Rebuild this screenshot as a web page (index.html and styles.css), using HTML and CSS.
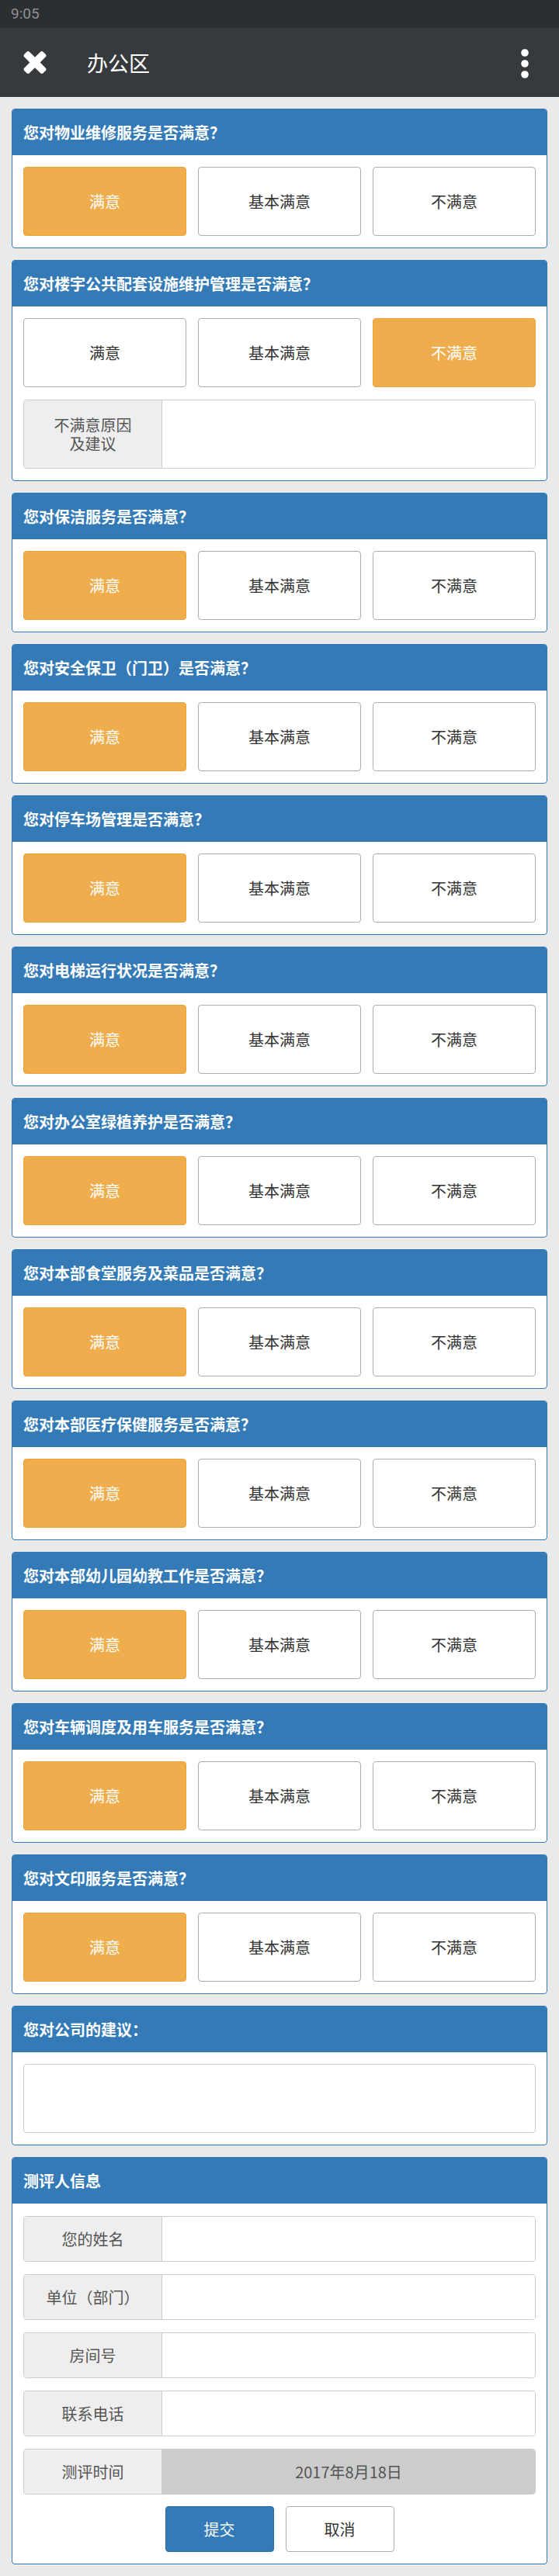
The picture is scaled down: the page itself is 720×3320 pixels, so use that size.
FILE: index.html
```html
<!DOCTYPE html>
<html lang="zh-CN">
<head>
<meta charset="utf-8">
<title>办公区</title>
<link rel="stylesheet" href="styles.css">
</head>
<body>
<div class="statusbar">9:05</div>
<header class="toolbar">
  <svg class="close-icon" viewBox="110 366 1188 1188" width="30" height="29" aria-hidden="true"><path fill="#fff" d="M1298 1322q0 40-28 68l-136 136q-28 28-68 28t-68-28l-294-294-294 294q-28 28-68 28t-68-28l-136-136q-28-28-28-68t28-68l294-294-294-294q-28-28-28-68t28-68l136-136q28-28 68-28t68 28l294 294 294-294q28-28 68-28t68 28l136 136q28 28 28 68t-28 68l-294 294 294 294q28 28 28 68z"/></svg>
  <h1 class="title">办公区</h1>
  <svg class="more-icon" viewBox="0 0 10 38" width="10" height="38" aria-hidden="true"><circle cx="5" cy="5" r="4.8" fill="#fff"/><circle cx="5" cy="19" r="4.8" fill="#fff"/><circle cx="5" cy="33" r="4.8" fill="#fff"/></svg>
</header>

<main class="content">
  <section class="panel">
    <div class="panel-heading">您对物业维修服务是否满意？</div>
    <div class="panel-body">
      <div class="choices"><button class="choice active">满意</button><button class="choice">基本满意</button><button class="choice">不满意</button></div>
    </div>
  </section>

  <section class="panel">
    <div class="panel-heading">您对楼宇公共配套设施维护管理是否满意？</div>
    <div class="panel-body">
      <div class="choices"><button class="choice">满意</button><button class="choice">基本满意</button><button class="choice active">不满意</button></div>
      <div class="input-group reason"><span class="addon">不满意原因<br>及建议</span><textarea class="field"></textarea></div>
    </div>
  </section>

  <section class="panel">
    <div class="panel-heading">您对保洁服务是否满意？</div>
    <div class="panel-body">
      <div class="choices"><button class="choice active">满意</button><button class="choice">基本满意</button><button class="choice">不满意</button></div>
    </div>
  </section>

  <section class="panel">
    <div class="panel-heading">您对安全保卫（门卫）是否满意？</div>
    <div class="panel-body">
      <div class="choices"><button class="choice active">满意</button><button class="choice">基本满意</button><button class="choice">不满意</button></div>
    </div>
  </section>

  <section class="panel">
    <div class="panel-heading">您对停车场管理是否满意？</div>
    <div class="panel-body">
      <div class="choices"><button class="choice active">满意</button><button class="choice">基本满意</button><button class="choice">不满意</button></div>
    </div>
  </section>

  <section class="panel">
    <div class="panel-heading">您对电梯运行状况是否满意？</div>
    <div class="panel-body">
      <div class="choices"><button class="choice active">满意</button><button class="choice">基本满意</button><button class="choice">不满意</button></div>
    </div>
  </section>

  <section class="panel">
    <div class="panel-heading">您对办公室绿植养护是否满意？</div>
    <div class="panel-body">
      <div class="choices"><button class="choice active">满意</button><button class="choice">基本满意</button><button class="choice">不满意</button></div>
    </div>
  </section>

  <section class="panel">
    <div class="panel-heading">您对本部食堂服务及菜品是否满意？</div>
    <div class="panel-body">
      <div class="choices"><button class="choice active">满意</button><button class="choice">基本满意</button><button class="choice">不满意</button></div>
    </div>
  </section>

  <section class="panel">
    <div class="panel-heading">您对本部医疗保健服务是否满意？</div>
    <div class="panel-body">
      <div class="choices"><button class="choice active">满意</button><button class="choice">基本满意</button><button class="choice">不满意</button></div>
    </div>
  </section>

  <section class="panel">
    <div class="panel-heading">您对本部幼儿园幼教工作是否满意？</div>
    <div class="panel-body">
      <div class="choices"><button class="choice active">满意</button><button class="choice">基本满意</button><button class="choice">不满意</button></div>
    </div>
  </section>

  <section class="panel">
    <div class="panel-heading">您对车辆调度及用车服务是否满意？</div>
    <div class="panel-body">
      <div class="choices"><button class="choice active">满意</button><button class="choice">基本满意</button><button class="choice">不满意</button></div>
    </div>
  </section>

  <section class="panel">
    <div class="panel-heading">您对文印服务是否满意？</div>
    <div class="panel-body">
      <div class="choices"><button class="choice active">满意</button><button class="choice">基本满意</button><button class="choice">不满意</button></div>
    </div>
  </section>

  <section class="panel">
    <div class="panel-heading">您对公司的建议：</div>
    <div class="panel-body">
      <textarea class="suggestion"></textarea>
    </div>
  </section>

  <section class="panel">
    <div class="panel-heading">测评人信息</div>
    <div class="panel-body info-body">
      <div class="input-group row"><span class="addon">您的姓名</span><input class="field" type="text"></div>
      <div class="input-group row"><span class="addon">单位（部门）</span><input class="field" type="text"></div>
      <div class="input-group row"><span class="addon">房间号</span><input class="field" type="text"></div>
      <div class="input-group row"><span class="addon">联系电话</span><input class="field" type="text"></div>
      <div class="input-group row"><span class="addon">测评时间</span><span class="field date">2017年8月18日</span></div>
      <div class="actions"><button class="btn primary">提交</button><button class="btn">取消</button></div>
    </div>
  </section>
</main>
</body>
</html>
```

FILE: styles.css
```css
* { box-sizing: border-box; }

body {
  margin: 0;
  background: #eaeaea;
  font-family: "Noto Sans CJK SC", "Liberation Sans", sans-serif;
  color: #333;
}

.statusbar {
  height: 36px;
  background: #2c2f32;
  color: #8e9092;
  font-family: Roboto, "Liberation Sans", sans-serif;
  font-size: 19px;
  line-height: 36px;
  padding-left: 14px;
}

.toolbar {
  height: 89px;
  background: #373a3d;
  display: flex;
  align-items: center;
  padding: 0 39px 0 30px;
}

.close-icon { display: block; flex: none; }

.title {
  margin: 0 0 0 52px;
  font-size: 27px;
  font-weight: normal;
  color: #fff;
  line-height: 1;
  flex: 1;
}

.more-icon { display: block; flex: none; margin-top: 2px; }

.content {
  padding: 15px 15px;
  display: flex;
  flex-direction: column;
  gap: 15px;
}

.panel {
  background: #fff;
  border: 1px solid #337ab7;
  border-radius: 4px;
  overflow: hidden;
}

.panel-heading {
  height: 59px;
  background: #337ab7;
  color: #fff;
  font-size: 20px;
  font-weight: bold;
  display: flex;
  align-items: center;
  padding: 0 14px;
  line-height: 1.2;
}

.panel-body {
  padding: 15px 14px 15px;
  display: flex;
  flex-direction: column;
  gap: 16px;
}

.choices {
  display: grid;
  grid-template-columns: repeat(3, 1fr);
  gap: 15px;
}

.choice {
  height: 89px;
  border: 1px solid #adadad;
  border-radius: 4px;
  background: #fff;
  color: #333;
  font-family: inherit;
  font-size: 20px;
  padding: 0;
}

.choice.active {
  background: #f0ad4e;
  border-color: #eea236;
  color: #fff;
}

.input-group {
  display: flex;
  border: 1px solid #ccc;
  border-radius: 4px;
  overflow: hidden;
}

.input-group.reason { height: 89px; }
.input-group.row { height: 59px; }

.addon {
  flex: none;
  width: 178px;
  background: #eee;
  border-right: 1px solid #ccc;
  color: #555;
  font-size: 20px;
  line-height: 24px;
  display: flex;
  align-items: center;
  justify-content: center;
  text-align: center;
}

.field {
  flex: 1;
  min-width: 0;
  border: 0;
  margin: 0;
  background: #fff;
  font-family: inherit;
  font-size: 20px;
  resize: none;
  outline: none;
}

.field.date {
  background: #ccc;
  color: #555;
  display: flex;
  align-items: center;
  justify-content: center;
}

.suggestion {
  display: block;
  height: 89px;
  width: 100%;
  border: 1px solid #ccc;
  border-radius: 4px;
  margin: 0;
  resize: none;
  outline: none;
  font-family: inherit;
}

.info-body { padding-top: 16px; }

.actions {
  display: flex;
  justify-content: center;
  gap: 15px;
  margin-top: -1px;
}

.btn {
  width: 140px;
  height: 59px;
  border: 1px solid #adadad;
  border-radius: 4px;
  background: #fff;
  color: #333;
  font-family: inherit;
  font-size: 20px;
  padding: 0;
}

.btn.primary {
  background: #337ab7;
  border-color: #2e6da4;
  color: #fff;
}
```
